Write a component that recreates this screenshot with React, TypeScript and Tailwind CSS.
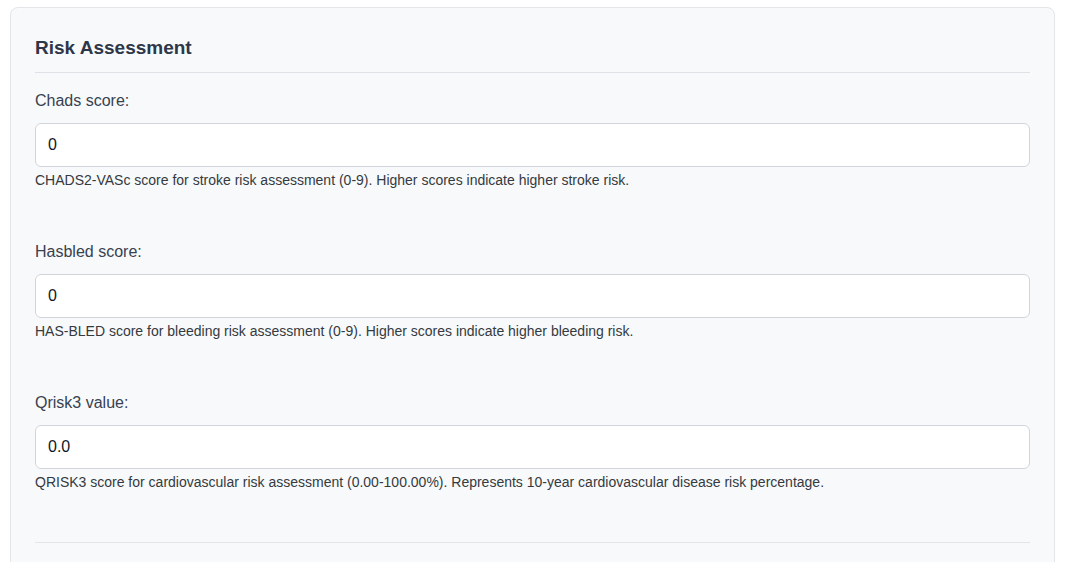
export default function App() {
  const fields = [
    {
      id: 'chads',
      label: 'Chads score:',
      value: '0',
      help: 'CHADS2-VASc score for stroke risk assessment (0-9). Higher scores indicate higher stroke risk.',
    },
    {
      id: 'hasbled',
      label: 'Hasbled score:',
      value: '0',
      help: 'HAS-BLED score for bleeding risk assessment (0-9). Higher scores indicate higher bleeding risk.',
    },
    {
      id: 'qrisk',
      label: 'Qrisk3 value:',
      value: '0.0',
      help: 'QRISK3 score for cardiovascular risk assessment (0.00-100.00%). Represents 10-year cardiovascular disease risk percentage.',
    },
  ];

  return (
    <div className="min-h-screen bg-white font-['Liberation_Sans',Arial,sans-serif] pt-[7px] pl-[10px] pr-[20px]">
      <div className="bg-[#f8f9fa] border border-[#e3e5e8] rounded-lg px-6 pt-[28px] h-[600px]">
        {/* Header */}
        <h2 className="text-[19px] leading-[24px] font-bold text-[#2d3748] pb-3 border-b border-[#dee2e6]">
          Risk Assessment
        </h2>

        {/* Fields */}
        <div className="pt-4">
          {fields.map((field) => (
            <div key={field.id} className="mb-[51px]">
              <label htmlFor={field.id} className="block text-[16px] leading-6 text-[#374151] mb-[10px]">
                {field.label}
              </label>
              <input
                id={field.id}
                type="text"
                defaultValue={field.value}
                className="block w-full h-[44px] px-3 bg-white border border-[#d1d5db] rounded-md text-[16px] text-[#111827] outline-none"
              />
              <p className="mt-1 text-[14px] leading-[18px] text-[#343a40]">{field.help}</p>
            </div>
          ))}
        </div>

        <div className="border-t border-[#e3e5e8]" />
      </div>
    </div>
  );
}
